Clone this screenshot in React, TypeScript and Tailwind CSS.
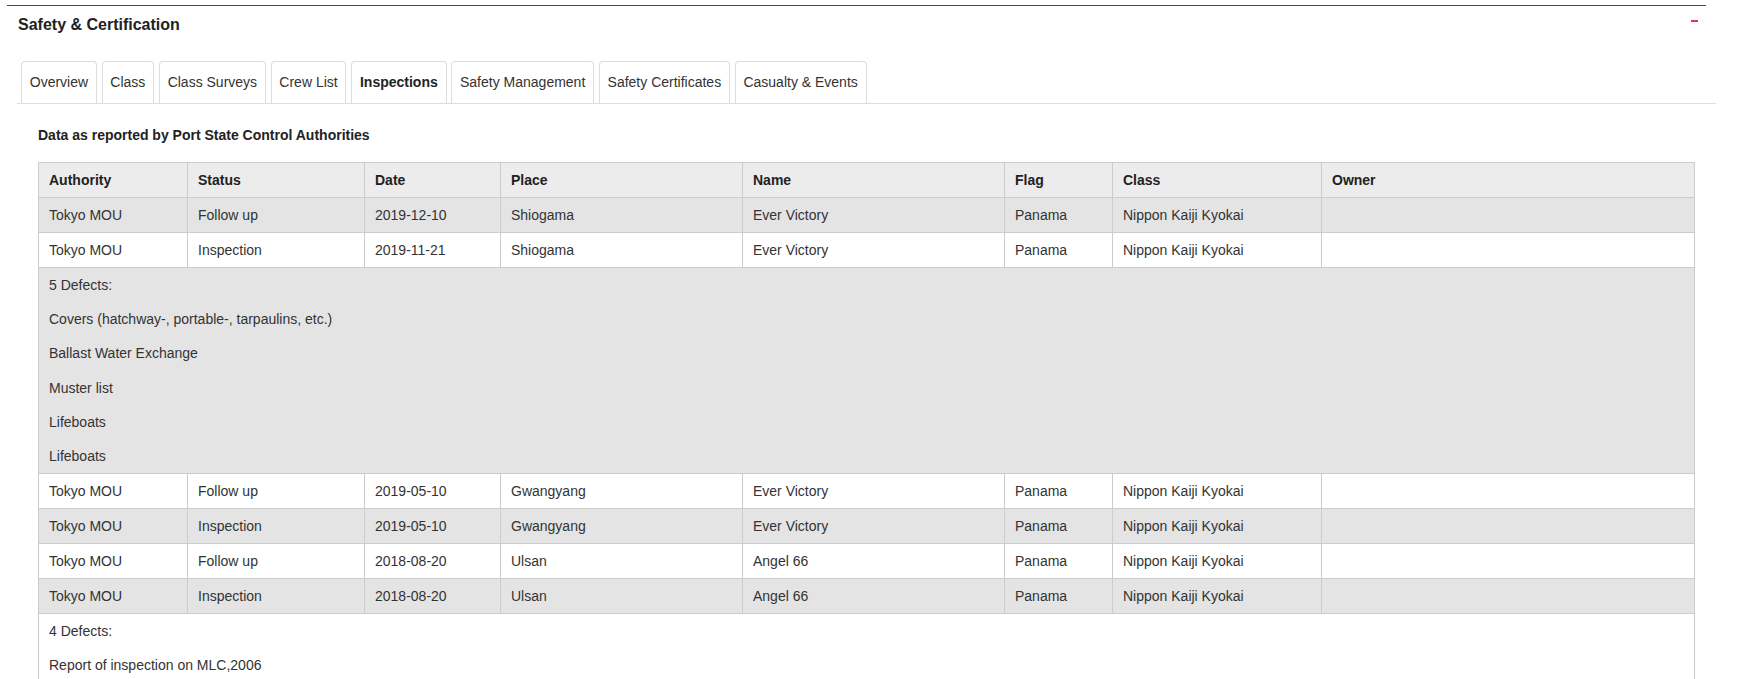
import React from "react";

type Row =
  | { kind: "data"; cells: string[] }
  | { kind: "defects"; lines: string[]; extra?: boolean };

const rows: Row[] = [
  { kind: "data", cells: ["Tokyo MOU", "Follow up", "2019-12-10", "Shiogama", "Ever Victory", "Panama", "Nippon Kaiji Kyokai", ""] },
  { kind: "data", cells: ["Tokyo MOU", "Inspection", "2019-11-21", "Shiogama", "Ever Victory", "Panama", "Nippon Kaiji Kyokai", ""] },
  {
    kind: "defects",
    lines: [
      "5 Defects:",
      "Covers (hatchway-, portable-, tarpaulins, etc.)",
      "Ballast Water Exchange",
      "Muster list",
      "Lifeboats",
      "Lifeboats",
    ],
  },
  { kind: "data", cells: ["Tokyo MOU", "Follow up", "2019-05-10", "Gwangyang", "Ever Victory", "Panama", "Nippon Kaiji Kyokai", ""] },
  { kind: "data", cells: ["Tokyo MOU", "Inspection", "2019-05-10", "Gwangyang", "Ever Victory", "Panama", "Nippon Kaiji Kyokai", ""] },
  { kind: "data", cells: ["Tokyo MOU", "Follow up", "2018-08-20", "Ulsan", "Angel 66", "Panama", "Nippon Kaiji Kyokai", ""] },
  { kind: "data", cells: ["Tokyo MOU", "Inspection", "2018-08-20", "Ulsan", "Angel 66", "Panama", "Nippon Kaiji Kyokai", ""] },
  {
    kind: "defects",
    lines: ["4 Defects:", "Report of inspection on MLC,2006"],
    extra: true,
  },
];

const tabs = [
  "Overview",
  "Class",
  "Class Surveys",
  "Crew List",
  "Inspections",
  "Safety Management",
  "Safety Certificates",
  "Casualty & Events",
];

const headers = ["Authority", "Status", "Date", "Place", "Name", "Flag", "Class", "Owner"];
const widths = [149, 177, 136, 242, 262, 108, 209, 373];

export default function App() {
  return (
    <div className="min-h-screen bg-white font-['Liberation_Sans',Arial,sans-serif] text-[#333]">
      <div className="ml-[7px] pt-[5px]">
        <div className="w-[1699px] border-t border-[#c8102e]">
          <div className="flex justify-between pl-[11px] pr-[8px]">
            <h2 className="pt-[10px] text-[16px] leading-[18px] font-bold text-[#222]">
              Safety &amp; Certification
            </h2>
            <div className="mt-[14px] h-[2px] w-[7px] bg-[#d9365b]" />
          </div>

          <div className="ml-[10px] mt-[27px] flex w-[1699px] items-end gap-[4.75px] border-b border-[#ddd] pl-[4px]">
            {tabs.map((t) => (
              <div
                key={t}
                className={
                  t === "Inspections"
                    ? "flex h-[42px] items-center rounded-t-[4px] border border-b-0 border-[#ddd] bg-white px-[7.75px] text-[14px] font-bold text-[#222]"
                    : "flex h-[42px] items-center rounded-t-[4px] border border-b-0 border-[#ddd] bg-white px-[7.75px] text-[14px] text-[#333]"
                }
              >
                {t}
              </div>
            ))}
          </div>

          <div className="ml-[31px]">
            <p className="mt-[21px] text-[14px] leading-[20px] font-bold text-[#222]">
              Data as reported by Port State Control Authorities
            </p>
            <table className="mt-[17px] w-[1656px] table-fixed border-collapse border border-[#ccc] text-[14px] leading-[18px] text-[#333]">
              <colgroup>
                {widths.map((w, i) => (
                  <col key={i} style={{ width: w }} />
                ))}
              </colgroup>
              <thead>
                <tr className="bg-[#ececec]">
                  {headers.map((h) => (
                    <th
                      key={h}
                      className="border border-[#ccc] px-[10px] py-[8px] text-left font-bold text-[#222]"
                    >
                      {h}
                    </th>
                  ))}
                </tr>
              </thead>
              <tbody>
                {rows.map((r, i) => {
                  const bg = i % 2 === 0 ? "bg-[#e4e4e4]" : "bg-white";
                  if (r.kind === "data") {
                    return (
                      <tr key={i} className={bg}>
                        {r.cells.map((c, j) => (
                          <td key={j} className="border border-[#ccc] px-[10px] py-[8px]">
                            {c}
                          </td>
                        ))}
                      </tr>
                    );
                  }
                  return (
                    <tr key={i} className={bg}>
                      <td colSpan={8} className="border border-[#ccc] px-[10px] py-[8px]">
                        <div className="flex flex-col gap-[16.2px]">
                          {r.lines.map((l, k) => (
                            <div key={k}>{l}</div>
                          ))}
                        </div>
                        {r.extra ? <div className="h-[120px]" /> : null}
                      </td>
                    </tr>
                  );
                })}
              </tbody>
            </table>
          </div>
        </div>
      </div>
    </div>
  );
}
